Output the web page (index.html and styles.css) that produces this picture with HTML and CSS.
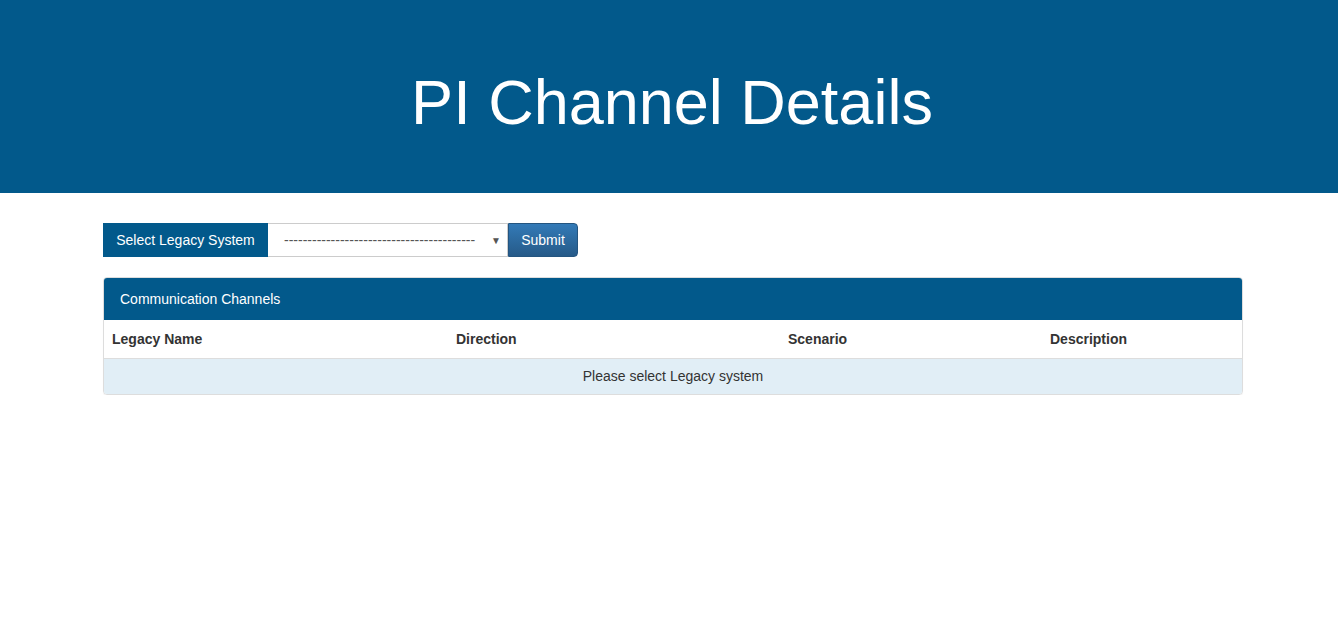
FILE: index.html
```html
<!DOCTYPE html>
<html>
<head>
<meta charset="utf-8">
<title>PI Channel Details</title>
<link rel="stylesheet" href="styles.css">
</head>
<body>
<header class="banner">
  <h1 class="banner-title">PI Channel Details</h1>
</header>
<main class="container">
  <form class="input-group">
    <span class="addon">Select Legacy System</span>
    <div class="select-wrap">
      <span class="select-text">-----------------------------------------</span>
      <span class="caret">&#9660;</span>
    </div>
    <button type="button" class="btn-submit">Submit</button>
  </form>
  <section class="panel">
    <div class="panel-heading">Communication Channels</div>
    <table class="table">
      <colgroup>
        <col class="c1"><col class="c2"><col class="c3"><col class="c4">
      </colgroup>
      <thead>
        <tr><th>Legacy Name</th><th>Direction</th><th>Scenario</th><th>Description</th></tr>
      </thead>
      <tbody>
        <tr class="info"><td colspan="4">Please select Legacy system</td></tr>
      </tbody>
    </table>
  </section>
</main>
</body>
</html>
```
FILE: styles.css
```css
* { box-sizing: border-box; }
html, body { margin: 0; padding: 0; }
body {
  font-family: "Liberation Sans", Arial, sans-serif;
  font-size: 14px;
  color: #333;
  background: #fff;
}
.banner {
  background: #02598b;
  height: 193px;
  display: flex;
  align-items: center;
  justify-content: center;
}
.banner-title {
  margin: 0;
  color: #fff;
  font-weight: normal;
  font-size: 63px;
  line-height: 1;
  position: relative;
  top: 6px;
  left: 3px;
}
.container {
  width: 1140px;
  margin: 30px 0 0 103px;
}
.input-group {
  display: flex;
  height: 34px;
  margin: 0 0 20px 0;
}
.addon {
  background: #02598b;
  color: #fff;
  width: 165px;
  display: flex;
  align-items: center;
  justify-content: center;
  font-size: 14px;
}
.select-wrap {
  width: 240px;
  border: 1px solid #ccc;
  border-left: none;
  display: flex;
  align-items: center;
  padding: 0 6px 0 16px;
  color: #555;
}
.select-text {
  flex: 1;
  font-size: 14px;
  overflow: hidden;
  white-space: nowrap;
  line-height: 1;
}
.caret {
  font-size: 10px;
  color: #555;
  margin-left: 4px;
}
.btn-submit {
  width: 70px;
  border: 1px solid #245580;
  border-radius: 0 4px 4px 0;
  background: linear-gradient(#337ab7, #265a88);
  color: #fff;
  font-family: inherit;
  font-size: 14px;
  padding: 0;
}
.panel {
  border: 1px solid #ddd;
  border-radius: 4px;
  overflow: hidden;
  box-shadow: 0 1px 1px rgba(0,0,0,.05);
}
.panel-heading {
  background: #02598b;
  color: #fff;
  height: 42px;
  display: flex;
  align-items: center;
  padding: 0 16px 0;
  font-size: 14px;
}
.table {
  width: 100%;
  border-collapse: collapse;
  table-layout: fixed;
}
.c1 { width: 344px; }
.c2 { width: 332px; }
.c3 { width: 262px; }
.c4 { width: auto; }
.table th {
  text-align: left;
  font-weight: bold;
  padding: 8px;
  height: 38px;
  border-bottom: 1px solid #ddd;
  color: #333;
}
.table td {
  padding: 8px;
  height: 36px;
  text-align: center;
}
.info td { background: #e1eef6; }
```
